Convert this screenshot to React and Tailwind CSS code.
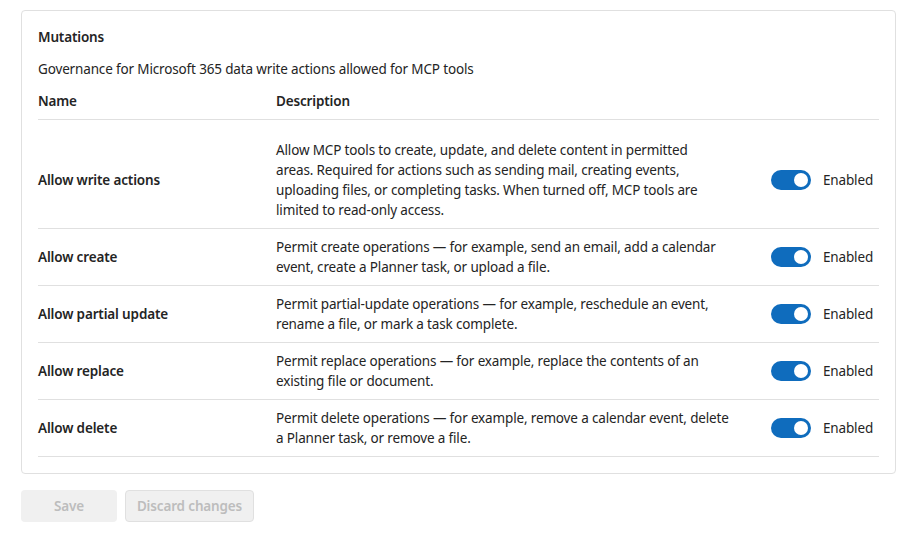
import React from "react";

const rows = [
  {
    name: "Allow write actions",
    lines: [
      "Allow MCP tools to create, update, and delete content in permitted",
      "areas. Required for actions such as sending mail, creating events,",
      "uploading files, or completing tasks. When turned off, MCP tools are",
      "limited to read-only access.",
    ],
    first: true,
  },
  {
    name: "Allow create",
    lines: [
      "Permit create operations \u2014 for example, send an email, add a calendar",
      "event, create a Planner task, or upload a file.",
    ],
  },
  {
    name: "Allow partial update",
    lines: [
      "Permit partial-update operations \u2014 for example, reschedule an event,",
      "rename a file, or mark a task complete.",
    ],
  },
  {
    name: "Allow replace",
    lines: [
      "Permit replace operations \u2014 for example, replace the contents of an",
      "existing file or document.",
    ],
  },
  {
    name: "Allow delete",
    lines: [
      "Permit delete operations \u2014 for example, remove a calendar event, delete",
      "a Planner task, or remove a file.",
    ],
  },
];

function Toggle() {
  return (
    <span className="flex h-[20px] w-[40px] items-center justify-end rounded-full bg-[#0f6cbd] pr-[3px]">
      <span className="h-[14px] w-[14px] rounded-full bg-white" />
    </span>
  );
}

export default function App() {
  return (
    <div
      className="min-h-[533px] w-[909px] bg-white text-[13.5px] leading-[20px] tracking-[-0.15px] text-[#242424]"
      style={{ fontFamily: '"Segoe UI", "Noto Sans", sans-serif' }}
    >
      <div className="pl-[21px] pr-[13px] pt-[10px]">
        <div className="rounded-[4px] border border-[#e0e0e0] px-[16px] pb-[16px] pt-[16px]">
          <div className="font-semibold">Mutations</div>
          <div className="mt-[12px]">Governance for Microsoft 365 data write actions allowed for MCP tools</div>
          <div className="mt-[12px] grid grid-cols-[238px_495px_1fr] border-b border-[#e0e0e0] pb-[8px] font-semibold">
            <div>Name</div>
            <div>Description</div>
            <div />
          </div>
          {rows.map((r) => (
            <div
              key={r.name}
              className={`grid grid-cols-[238px_495px_1fr] items-center border-b border-[#e0e0e0] pb-[8px] ${r.first ? "pt-[20px]" : "pt-[8px]"}`}
            >
              <div className="font-semibold">{r.name}</div>
              <div className="whitespace-nowrap">
                {r.lines.map((l) => (
                  <div key={l}>{l}</div>
                ))}
              </div>
              <div className="flex items-center gap-[12px]">
                <Toggle />
                <span>Enabled</span>
              </div>
            </div>
          ))}
        </div>
        <div className="mt-[16px] flex gap-[8px]">
          <button className="h-[32px] w-[96px] rounded-[4px] bg-[#f0f0f0] font-semibold text-[#bdbdbd]">Save</button>
          <button className="h-[32px] w-[129px] rounded-[4px] border border-[#e0e0e0] bg-[#f0f0f0] font-semibold text-[#bdbdbd]">
            Discard changes
          </button>
        </div>
      </div>
    </div>
  );
}
